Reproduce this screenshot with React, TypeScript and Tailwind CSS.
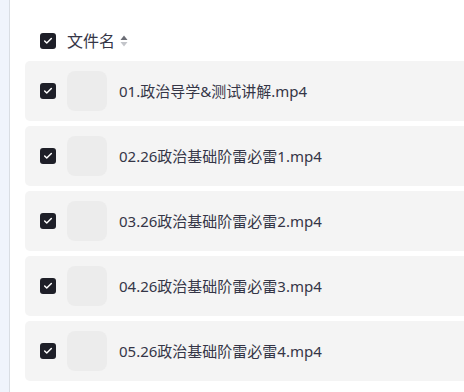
import { Check } from "lucide-react";

const FILES = [
  "01.政治导学&测试讲解.mp4",
  "02.26政治基础阶雷必雷1.mp4",
  "03.26政治基础阶雷必雷2.mp4",
  "04.26政治基础阶雷必雷3.mp4",
  "05.26政治基础阶雷必雷4.mp4",
];

function Box() {
  return (
    <span className="flex h-4 w-4 shrink-0 items-center justify-center rounded-[3px] bg-[#1e1f28]">
      <Check size={10} strokeWidth={3.5} className="text-white" />
    </span>
  );
}

function SortIcon() {
  return (
    <svg width="8" height="12" viewBox="0 0 8 12" className="ml-[5px]">
      <path d="M4 0.5 L7.5 5 H0.5 Z" fill="#6b6d75" />
      <path d="M4 11.5 L7.5 7 H0.5 Z" fill="#c3c5ca" />
    </svg>
  );
}

export default function App() {
  return (
    <div
      className="flex h-[392px] w-[464px] overflow-hidden bg-white text-[#353647]"
      style={{ fontFamily: '"Noto Sans", "Noto Sans CJK SC", sans-serif' }}
    >
      <div className="w-[10px] shrink-0 border-r border-[#d9dde3] bg-[#f0f4fc]" />
      <div className="flex min-w-0 flex-1 flex-col pl-[15px] pt-[24px]">
        <div className="flex h-[34px] items-center pl-[15px]">
          <Box />
          <span className="ml-[11px] text-[16px]">文件名</span>
          <SortIcon />
        </div>
        <div className="mt-[3px] mr-[-10px] flex flex-col gap-[5px]">
          {FILES.map((name) => (
            <div key={name} className="flex h-[60px] items-center rounded-[5px] bg-[#f4f4f4] pl-[15px]">
              <Box />
              <div className="ml-[11px] h-10 w-10 shrink-0 rounded-[8px] bg-[#ececec]" />
              <span className="ml-[12px] text-[15px]">{name}</span>
            </div>
          ))}
        </div>
      </div>
    </div>
  );
}
